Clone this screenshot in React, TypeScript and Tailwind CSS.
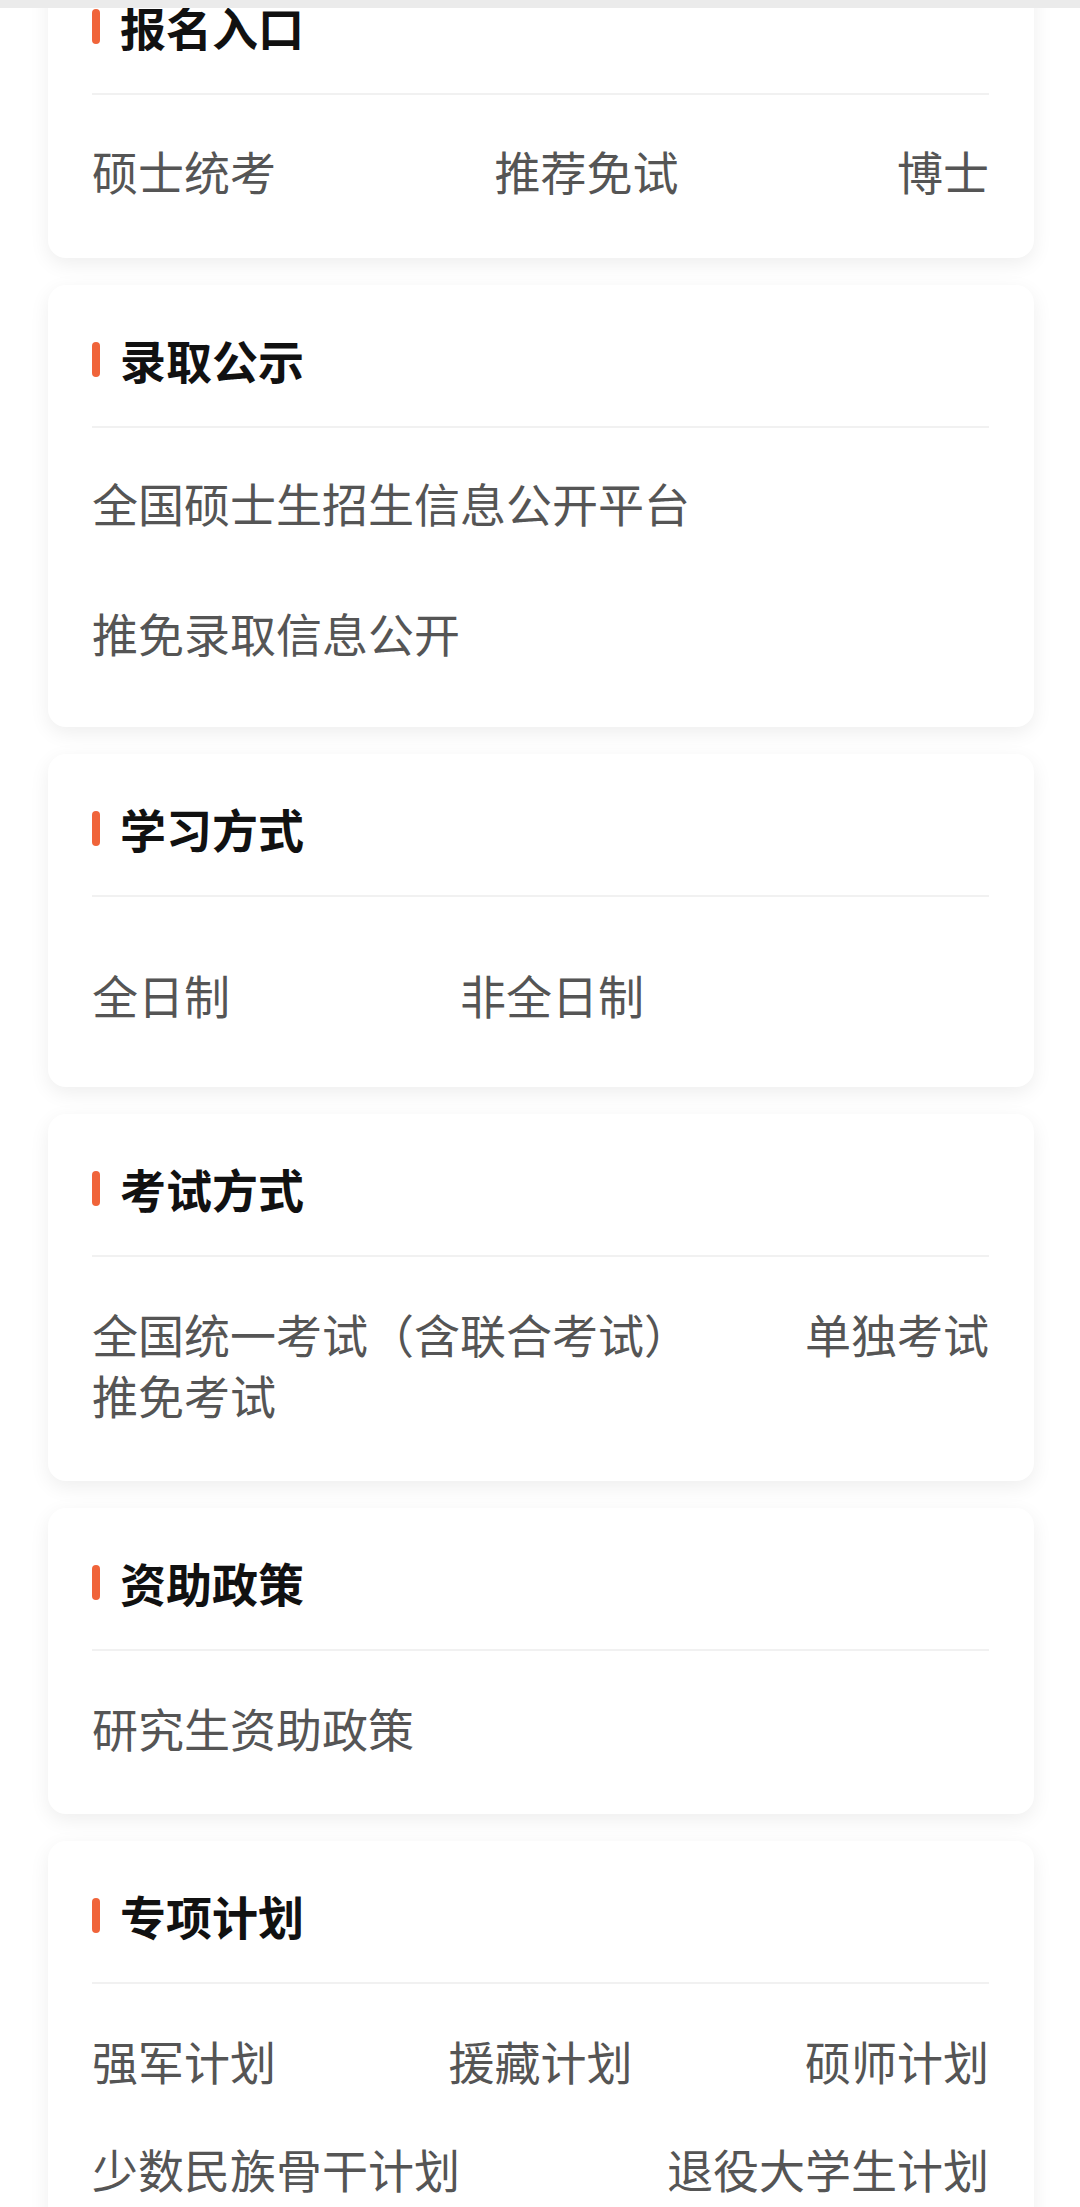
import type { ReactNode } from "react";

const font = {
  fontFamily: '"Noto Sans CJK SC", "Noto Sans", sans-serif',
};

function Card({
  title,
  children,
  first,
}: {
  title: string;
  children: ReactNode;
  first?: boolean;
}) {
  return (
    <section
      className={`rounded-[18px] bg-white pl-11 pr-[45px] shadow-[0_6px_20px_rgba(0,0,0,0.07)] ${
        first ? "-mt-[56px]" : ""
      }`}
    >
      {/* 标题 */}
      <div className="mt-[46px] mb-[39px] flex h-[56px] items-center gap-[20px]">
        <span className="h-[35px] w-[8px] rounded-full bg-[#f0643a]" />
        <h2 className="text-[46px] leading-[56px] font-bold text-[#111]">
          {title}
        </h2>
      </div>
      <div className="h-[2px] bg-[#f1f1f1]" />
      {children}
    </section>
  );
}

const itemClass = "text-[46px] leading-[61px] text-[#555]";

export default function App() {
  return (
    <div className="min-h-[2207px] overflow-hidden bg-white" style={font}>
      <div className="relative z-10 h-[8px] bg-[#ebebeb]" />

      <div className="flex flex-col gap-[27px] pl-12 pr-[46px]">
        <Card title="报名入口" first>
          <div className="flex justify-between pt-[45px] pb-[57px]">
            <span className={itemClass}>硕士统考</span>
            <span className={itemClass}>推荐免试</span>
            <span className={itemClass}>博士</span>
          </div>
        </Card>

        <Card title="录取公示">
          <div className="flex flex-col gap-[69px] pt-[44px] pb-[64px]">
            <span className={itemClass}>全国硕士生招生信息公开平台</span>
            <span className={itemClass}>推免录取信息公开</span>
          </div>
        </Card>

        <Card title="学习方式">
          <div className="flex gap-[230px] pt-[67px] pb-[62px]">
            <span className={itemClass}>全日制</span>
            <span className={itemClass}>非全日制</span>
          </div>
        </Card>

        <Card title="考试方式">
          <div className="flex flex-wrap justify-between pt-[46px] pb-[56px]">
            <span className={itemClass}>全国统一考试（含联合考试）</span>
            <span className={itemClass}>单独考试</span>
            <span className={itemClass}>推免考试</span>
          </div>
        </Card>

        <Card title="资助政策">
          <div className="pt-[46px] pb-[56px]">
            <span className={itemClass}>研究生资助政策</span>
          </div>
        </Card>

        <Card title="专项计划">
          <div className="flex flex-col gap-[47px] pt-[46px] pb-[56px]">
            <div className="flex justify-between">
              <span className={itemClass}>强军计划</span>
              <span className={itemClass}>援藏计划</span>
              <span className={itemClass}>硕师计划</span>
            </div>
            <div className="flex justify-between">
              <span className={itemClass}>少数民族骨干计划</span>
              <span className={itemClass}>退役大学生计划</span>
            </div>
          </div>
        </Card>
      </div>
    </div>
  );
}
